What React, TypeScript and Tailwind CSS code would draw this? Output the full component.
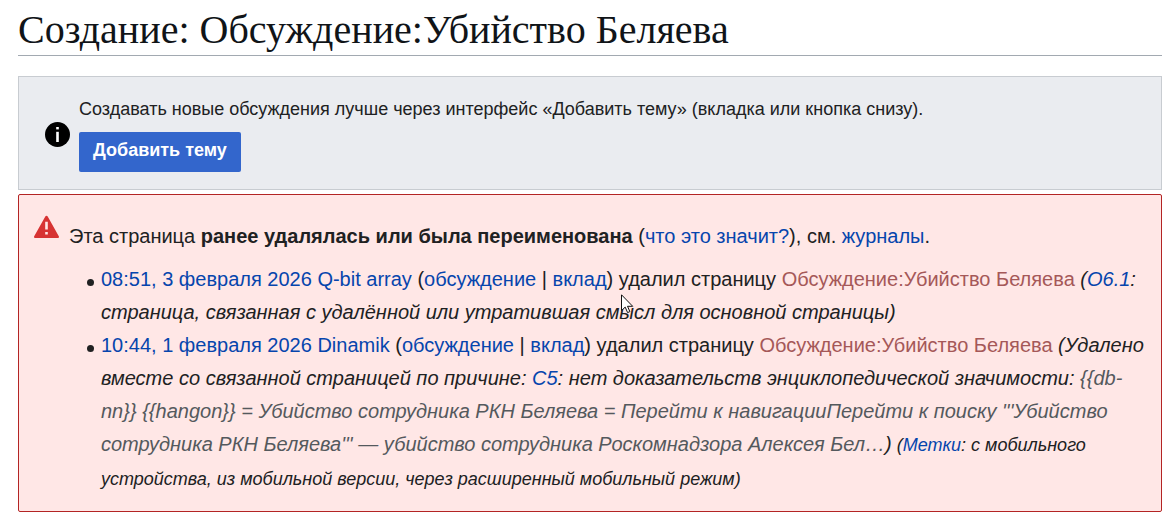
import type { ReactNode } from 'react';

const TextLink = ({ children, visited = false }: { children: ReactNode; visited?: boolean }) => (
  <a href="#" className={`hover:underline ${visited ? 'text-[#a55858]' : 'text-[#0645ad]'}`}>
    {children}
  </a>
);

const InfoIcon = () => (
  <svg viewBox="0 0 25 25" className="mt-0.5 h-[25px] w-[25px] shrink-0" aria-hidden="true">
    <circle cx="12.5" cy="12.5" r="12.5" fill="#000" />
    <rect x="11.2" y="5" width="2.6" height="2.4" fill="#fff" />
    <rect x="11.2" y="9.8" width="2.6" height="10.2" fill="#fff" />
  </svg>
);

const AlertIcon = () => (
  <svg viewBox="0 0 25 25" className="h-[25px] w-[25px] shrink-0" aria-hidden="true">
    <path
      d="M13.7 1.4 24.8 21.2A1.2 1.2 0 0 1 23.8 23H1.2A1.2 1.2 0 0 1 .2 21.2L11.3 1.4A1.4 1.4 0 0 1 13.7 1.4Z"
      fill="#d73333"
    />
    <path d="M11.2 6.8h2.6v7.7h-2.6zM11.2 17h2.6v2.5h-2.6z" fill="#ffe7e6" />
  </svg>
);

const Pointer = () => (
  <svg
    viewBox="0 0 13 20"
    className="pointer-events-none absolute top-[31px] left-[520px] h-5 w-[13px]"
    aria-hidden="true"
  >
    <path
      d="M.5.8v15.8l3.7-3.5 2.4 5.5 2.3-1-2.4-5.3h5.2Z"
      fill="#fff"
      stroke="#111"
      strokeWidth="1"
    />
  </svg>
);

const entries = [
  {
    time: '08:51, 3 февраля 2026',
    user: 'Q-bit array',
    reason: (
      <>
        (<TextLink>О6.1</TextLink>: страница, связанная с удалённой или утратившая смысл для основной страницы)
      </>
    ),
    tags: null,
    pointer: true,
  },
  {
    time: '10:44, 1 февраля 2026',
    user: 'Dinamik',
    reason: (
      <>
        (Удалено вместе со связанной страницей по причине: <TextLink>С5</TextLink>: нет доказательств
        энциклопедической значимости:{' '}
        <span className="text-[#54595d]">
          {"{{db-nn}} {{hangon}} = Убийство сотрудника РКН Беляева = Перейти к навигацииПерейти к поиску '''Убийство сотрудника РКН Беляева''' — убийство сотрудника Роскомнадзора Алексея Бел…"}
        </span>
        )
      </>
    ),
    tags: 'с мобильного устройства, из мобильной версии, через расширенный мобильный режим',
    pointer: false,
  },
];

const App = () => {
  return (
    <main className="bg-white pr-[5px] pl-[18px] font-['Liberation_Sans',Arial,sans-serif] text-[#202122]">
      <h1 className="border-b border-[#a2a9b1] pt-2 pb-1 font-['Liberation_Serif',Georgia,serif] text-[40px] leading-[43px] text-[#101418]">
        Создание: Обсуждение:Убийство Беляева
      </h1>

      <section className="mt-5 flex items-center gap-[9px] border border-[#c8ccd1] bg-[#eaecf0] px-[26px] py-[17px]">
        <InfoIcon />
        <div>
          <p className="text-lg leading-[30px]">
            Создавать новые обсуждения лучше через интерфейс «Добавить тему» (вкладка или кнопка снизу).
          </p>
          <button
            type="button"
            className="mt-2 block h-10 cursor-pointer rounded-xs bg-[#3366cc] px-3.5 pb-1 text-lg font-bold text-white"
          >
            Добавить тему
          </button>
        </div>
      </section>

      <section className="mt-1 flex gap-[10px] rounded-xs border border-[#b32424] bg-[#ffe7e6] px-[15px] pt-5 pb-[15px] text-xl leading-[33px]">
        <AlertIcon />
        <div className="min-w-0 pt-[5px]">
          <p>
            Эта страница <b>ранее удалялась или была переименована</b> (<TextLink>что это значит?</TextLink>), см.{' '}
            <TextLink>журналы</TextLink>.
          </p>
          <ul className="mt-2.5 pl-[18px]">
            {entries.map((entry) => (
              <li key={entry.time} className="flex gap-[7px]">
                <span className="mt-4 h-[7px] w-[7px] shrink-0 rounded-full bg-[#202122]" />
                <div className="relative min-w-0">
                  <TextLink>{entry.time}</TextLink> <TextLink>{entry.user}</TextLink> (<TextLink>обсуждение</TextLink> |{' '}
                  <TextLink>вклад</TextLink>) удалил страницу <TextLink visited>Обсуждение:Убийство Беляева</TextLink>{' '}
                  <i>{entry.reason}</i>
                  {entry.tags && (
                    <i className="text-lg leading-[33px]">
                      {' '}
                      (<TextLink>Метки</TextLink>: {entry.tags})
                    </i>
                  )}
                  {entry.pointer && <Pointer />}
                </div>
              </li>
            ))}
          </ul>
        </div>
      </section>
    </main>
  );
};

export default App;
